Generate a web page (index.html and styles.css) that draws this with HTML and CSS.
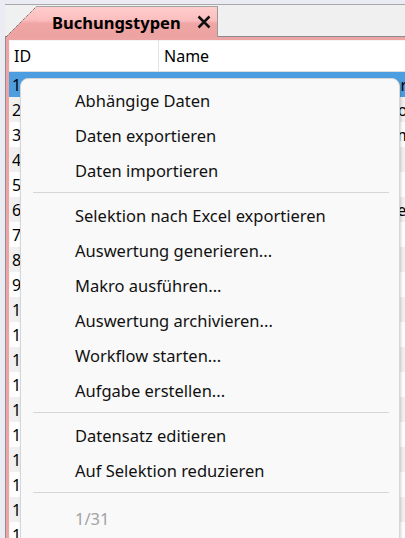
FILE: index.html
```html
<!DOCTYPE html>
<html>
<head>
  <title>Buchungstypen</title>
  <link rel="stylesheet" href="styles.css">
</head>
<body>
  <div class="window">
    <div class="tabstrip">
      <div class="tab">
        <svg class="tab-slant" width="31" height="31" viewBox="0 0 31 31">
          <defs>
            <linearGradient id="tabFill" x1="0" y1="0" x2="0" y2="1">
              <stop offset="0" stop-color="#ffcdcd"/>
              <stop offset="0.45" stop-color="#fbbdbd"/>
              <stop offset="0.55" stop-color="#f1a6a6"/>
              <stop offset="1" stop-color="#eda2a2"/>
            </linearGradient>
          </defs>
          <polygon points="31,0 31,31 0,31" fill="url(#tabFill)"/>
          <line x1="0" y1="31" x2="31" y2="0" stroke="#4a4a4a" stroke-width="1" stroke-dasharray="1 1"/>
        </svg>
        <div class="tab-label">
          <span class="tab-title">Buchungstypen</span>
          <svg class="tab-close" width="14" height="14" viewBox="0 0 14 14">
            <path d="M1.5 1.5 L12.5 12.5 M12.5 1.5 L1.5 12.5" stroke="#111" stroke-width="2.5" fill="none"/>
          </svg>
        </div>
      </div>
    </div>

    <div class="pane">
      <table class="grid">
        <colgroup>
          <col class="col-id">
          <col>
        </colgroup>
        <thead>
          <tr><th class="head-id">ID</th><th>Name</th></tr>
        </thead>
        <tbody>
          <tr class="selected"><td>1</td><td>Ausgangsrechnung Inland Lieferung</td></tr>
          <tr><td>2</td><td>Eingangsrechnung Inland mit Vorsteuerabzug</td></tr>
          <tr><td>3</td><td>Gutschrift an Kunden aus Reklamation</td></tr>
          <tr><td>4</td><td>Kasse</td></tr>
          <tr><td>5</td><td>Bank</td></tr>
          <tr><td>6</td><td>Umbuchung zwischen Kostenstellen intern</td></tr>
          <tr><td>7</td><td>Anzahlung</td></tr>
          <tr><td>8</td><td>Abschreibung</td></tr>
          <tr><td>9</td><td>Lohn</td></tr>
          <tr><td>10</td><td>Reisekosten</td></tr>
          <tr><td>11</td><td>Skonto</td></tr>
          <tr><td>12</td><td>Storno</td></tr>
          <tr><td>13</td><td>Mahnung</td></tr>
          <tr><td>14</td><td>Zahlungseingang</td></tr>
          <tr><td>15</td><td>Zahlungsausgang</td></tr>
          <tr><td>16</td><td>Eröffnung</td></tr>
          <tr><td>17</td><td>Abschluss</td></tr>
          <tr><td>18</td><td>Korrektur</td></tr>
          <tr><td>19</td><td>Sonstige</td></tr>
          <tr><td>20</td><td>Verrechnung</td></tr>
        </tbody>
      </table>
    </div>

    <div class="context-menu">
      <div class="menu-item">Abhängige Daten</div>
      <div class="menu-item">Daten exportieren</div>
      <div class="menu-item">Daten importieren</div>
      <div class="menu-sep"></div>
      <div class="menu-item">Selektion nach Excel exportieren</div>
      <div class="menu-item">Auswertung generieren...</div>
      <div class="menu-item">Makro ausführen...</div>
      <div class="menu-item">Auswertung archivieren...</div>
      <div class="menu-item">Workflow starten...</div>
      <div class="menu-item">Aufgabe erstellen...</div>
      <div class="menu-sep"></div>
      <div class="menu-item">Datensatz editieren</div>
      <div class="menu-item">Auf Selektion reduzieren</div>
      <div class="menu-sep"></div>
      <div class="menu-item disabled">1/31</div>
    </div>
  </div>
</body>
</html>
```

FILE: styles.css
```css
body {
  margin: 0;
  height: 538px;
  overflow: hidden;
  background: #ebebf3;
  font-family: "Noto Sans", "Open Sans", sans-serif;
  font-size: 16px;
  color: #000;
}
.window {
  position: relative;
  margin: 4px 0 0 5px;
}

/* tab bar */
.tabstrip {
  display: flex;
  align-items: flex-end;
  height: 31px;
  padding-left: 1px;
  background: #f0f0f0;
  border-top: 1px solid #a9a9a9;
  border-bottom: 1px solid #8c8c8c;
}
.tab {
  display: flex;
  height: 31px;
  margin-bottom: -1px;
}
.tab-slant {
  display: block;
}
.tab-label {
  display: flex;
  align-items: center;
  gap: 16px;
  height: 30px;
  padding: 0 6px 0 15px;
  border-top: 1px solid #a4a4a4;
  border-right: 1px solid #9a9a9a;
  background: linear-gradient(#ffcdcd 0%, #fbbdbd 45%, #f1a6a6 55%, #eda2a2 100%);
}
.tab-title {
  font-weight: bold;
  font-size: 16.5px;
}
.tab-close {
  display: block;
}

/* data pane */
.pane {
  border-left: 1px solid #8e8e8e;
}
.grid {
  width: 100%;
  table-layout: fixed;
  border-collapse: collapse;
  background: #fff;
  border-top: 3px solid #eda4a4;
  border-left: 3px solid #eda4a4;
  box-shadow: inset 1px 1px 0 #f4f4f4;
}
.col-id {
  width: 151px;
}
.grid th {
  height: 31px;
  padding: 0 5px;
  text-align: left;
  font-weight: normal;
  border-bottom: 1px solid #dedede;
}
.grid th.head-id {
  border-right: 1px solid #e4e4e4;
}
.grid td {
  height: 25px;
  padding: 0 3px;
  white-space: nowrap;
  overflow: hidden;
}
.grid tbody tr:nth-child(even) {
  background: #f0f0f0;
}
.grid tbody tr.selected {
  background: #4c9ee0;
}

/* popup menu */
.context-menu {
  position: absolute;
  left: 15px;
  top: 74px;
  width: 378px;
  height: 480px;
  padding-top: 4px;
  background: #f9f9f9;
  border: 1px solid #d6d6d6;
  border-radius: 8px;
  box-shadow: 1px 2px 3px rgba(0, 0, 0, 0.18);
  font-size: 16.5px;
}
.menu-item {
  height: 35px;
  line-height: 35px;
  padding-left: 54px;
  color: #111;
}
.menu-item.disabled {
  padding-top: 3px;
  color: #a3a3a3;
}
.menu-sep {
  height: 1px;
  margin: 4px 10px 5px 12px;
  background: #d6d6d6;
}
```
